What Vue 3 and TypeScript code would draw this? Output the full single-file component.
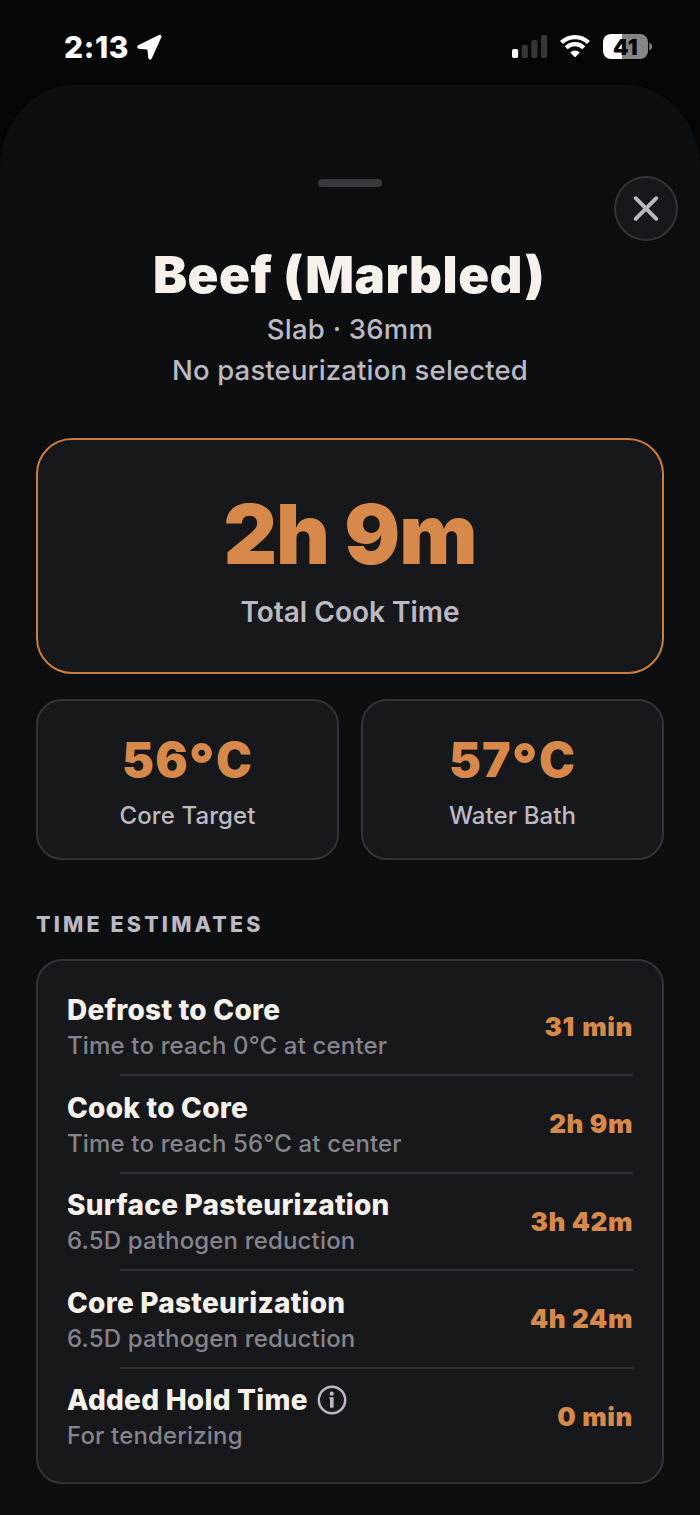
<script setup lang="ts">
interface Stat {
  value: string
  label: string
  kind: string
}

interface Estimate {
  title: string
  note: string
  value: string
  info?: boolean
  kind: string
}

const stats: Stat[] = [
  { value: '56', label: 'Core Target', kind: 'core' },
  { value: '57', label: 'Water Bath', kind: 'bath' },
]

const estimates: Estimate[] = [
  { title: 'Defrost to Core', note: 'Time to reach 0°C at center', value: '31 min', kind: 'defrost' },
  { title: 'Cook to Core', note: 'Time to reach 56°C at center', value: '2h 9m', kind: 'cook' },
  { title: 'Surface Pasteurization', note: '6.5D pathogen reduction', value: '3h 42m', kind: 'surface' },
  { title: 'Core Pasteurization', note: '6.5D pathogen reduction', value: '4h 24m', kind: 'pasteur' },
  { title: 'Added Hold Time', note: 'For tenderizing', value: '0 min', info: true, kind: 'hold' },
]
</script>

<template>
  <div class="screen">
    <header class="status">
      <div class="status-left">
        <span class="clock">2:13</span>
        <svg class="arrow" width="28" height="28" viewBox="0 0 28 28">
          <path d="M4 12.9 L24.7 2.6 L15.1 23.8 L14 13.9 Z" fill="#fff" stroke="#fff" stroke-width="3.6" stroke-linejoin="round" />
        </svg>
      </div>
      <div class="status-right">
        <svg class="signal" width="36" height="24" viewBox="0 0 36 24">
          <rect x="0" y="14" width="6.2" height="9" rx="1.8" fill="#fff" />
          <rect x="9.7" y="10" width="6.2" height="13" rx="1.8" fill="#353636" />
          <rect x="19.3" y="5" width="6.2" height="18" rx="1.8" fill="#353636" />
          <rect x="29" y="0" width="6.2" height="23" rx="1.8" fill="#353636" />
        </svg>
        <svg class="wifi" width="30" height="24" viewBox="0 0 30 24">
          <g fill="none" stroke="#fff" stroke-width="4.3">
            <path d="M1.5 8.5 A19.4 19.4 0 0 1 28.5 8.5" />
            <path d="M6.2 13.7 A12.5 12.5 0 0 1 23.8 13.7" />
          </g>
          <path d="M10.2 18.4 A6.9 6.9 0 0 1 19.8 18.4 L15.7 22.8 Q15 23.4 14.3 22.8 Z" fill="#fff" />
        </svg>
        <div class="battery"><span>41</span></div>
        <svg class="nub" width="4" height="9" viewBox="0 0 4 9">
          <path d="M0.3 0.4 Q3.2 1.6 3.2 4.5 Q3.2 7.4 0.3 8.6 Z" fill="#858585" />
        </svg>
      </div>
    </header>

    <main class="sheet">
      <div class="handle"></div>
      <button class="close" aria-label="Close">
        <svg width="28" height="28" viewBox="0 0 28 28">
          <path d="M3.7 3.2 L24.3 23.8 M24.3 3.2 L3.7 23.8" stroke="#bcb9c3" stroke-width="3.9" stroke-linecap="round" />
        </svg>
      </button>

      <h1>Beef (Marbled)</h1>
      <p class="meta slab">Slab · 36mm</p>
      <p class="meta pasteurization">No pasteurization selected</p>

      <section class="hero">
        <div class="hero-value">2h 9m</div>
        <div class="hero-label">Total Cook Time</div>
      </section>

      <section class="stats">
        <div v-for="s in stats" :key="s.kind" class="stat" :class="s.kind">
          <div class="stat-value">{{ s.value }}<span class="degree">°</span>C</div>
          <div class="stat-label">{{ s.label }}</div>
        </div>
      </section>

      <h2>TIME ESTIMATES</h2>
      <section class="list">
        <div v-for="e in estimates" :key="e.kind" class="row" :class="e.kind">
          <div class="row-text">
            <div class="row-title">
              <span>{{ e.title }}</span>
              <svg v-if="e.info" width="30" height="30" viewBox="0 0 30 30">
                <circle cx="15" cy="15" r="13.2" fill="none" stroke="#bcb9c3" stroke-width="2.5" />
                <circle cx="14.7" cy="8.7" r="2.1" fill="#bcb9c3" />
                <path d="M12.4 12.2 H16.6 V22.8 H13 V14 H12.4 Z" fill="#bcb9c3" />
              </svg>
            </div>
            <div class="row-note">{{ e.note }}</div>
          </div>
          <div class="row-value">{{ e.value }}</div>
        </div>
      </section>
    </main>
  </div>
</template>

<style>
body {
  margin: 0;
  background: #060606;
}
</style>

<style scoped>
.screen {
  width: 700px;
  height: 1515px;
  overflow: hidden;
  background: #060606;
  font-family: Inter, "Liberation Sans", sans-serif;
  color: #f6f1ea;
  display: flex;
  flex-direction: column;
}
.status {
  height: 85px;
  flex: none;
  display: flex;
  justify-content: space-between;
  align-items: flex-start;
  box-sizing: border-box;
  padding: 34px 47px 0 64px;
}
.status-left,
.status-right {
  display: flex;
  align-items: flex-start;
}
.clock {
  font-size: 30px;
  line-height: 26px;
  font-weight: 800;
  letter-spacing: 0.6px;
  color: #fff;
  width: 71px;
  white-space: nowrap;
}
.signal {
  margin-top: 1px;
}
.wifi {
  margin: 0 13px 0 12px;
}
.battery {
  width: 45px;
  height: 25px;
  border-radius: 8px;
  background: linear-gradient(90deg, #fff 0 19px, #858585 19px);
  color: #060606;
  font-size: 22px;
  font-weight: 900;
  letter-spacing: 0.4px;
  line-height: 26px;
  text-align: center;
}
.nub {
  margin: 8px 0 0 1px;
}
.sheet {
  position: relative;
  flex: 1;
  box-sizing: border-box;
  padding: 94px 36px 0;
  border-radius: 74px 74px 0 0 / 84px 84px 0 0;
  background: #0d0e10;
}
.handle {
  width: 64px;
  height: 8px;
  border-radius: 4px;
  background: #38383f;
  margin: 0 auto;
}
.close {
  position: absolute;
  top: 91px;
  right: 22px;
  width: 64px;
  height: 65px;
  box-sizing: border-box;
  padding: 0;
  border: 2px solid #33343a;
  border-radius: 50%;
  background: #17181c;
  display: flex;
  align-items: center;
  justify-content: center;
}
h1,
h2,
p {
  margin: 0;
}
h1 {
  margin-top: 58px;
  font-size: 51px;
  line-height: 60px;
  font-weight: 900;
  letter-spacing: 0.55px;
  text-align: center;
  text-indent: -2px;
}
.meta {
  font-size: 27.5px;
  line-height: 41px;
  font-weight: 500;
  letter-spacing: 0.15px;
  text-align: center;
  color: #bcb9c3;
}
.slab {
  margin-top: 4px;
  letter-spacing: 0.25px;
}
.hero {
  box-sizing: border-box;
  height: 236px;
  margin-top: 47px;
  padding-top: 49px;
  border: 2px solid #c87d43;
  border-radius: 36px;
  background: #17181c;
  text-align: center;
}
.hero-value {
  font-size: 83px;
  line-height: 90px;
  font-weight: 900;
  letter-spacing: -1.1px;
  color: #d6894b;
}
.hero-label {
  margin-top: 15px;
  font-size: 28px;
  line-height: 36px;
  font-weight: 600;
  color: #bcb9c3;
}
.stats {
  display: grid;
  grid-template-columns: 1fr 1fr;
  gap: 22px;
  margin-top: 25px;
}
.stat {
  box-sizing: border-box;
  height: 161px;
  padding-top: 30.5px;
  border: 2px solid #33343a;
  border-radius: 26px;
  background: #17181c;
  text-align: center;
}
.stat-value {
  font-size: 48px;
  line-height: 56px;
  font-weight: 900;
  letter-spacing: 1.2px;
  color: #d6894b;
}
.degree {
  font-size: 56px;
  line-height: 0;
  vertical-align: -7px;
}
.stat-label {
  margin-top: 13px;
  font-size: 24px;
  line-height: 30px;
  font-weight: 500;
  letter-spacing: 0.1px;
  color: #bcb9c3;
}
h2 {
  margin-top: 50px;
  font-size: 21.5px;
  line-height: 28px;
  font-weight: 800;
  letter-spacing: 3.15px;
  color: #bcb9c3;
}
.list {
  box-sizing: border-box;
  height: 525px;
  margin-top: 21px;
  padding: 16.9px 29px 0;
  border: 2px solid #33343a;
  border-radius: 26px;
  background: #17181c;
}
.row {
  position: relative;
  box-sizing: border-box;
  height: 97.5px;
  display: flex;
  align-items: center;
  justify-content: space-between;
}
.row:not(:last-child)::after {
  content: "";
  position: absolute;
  left: 53px;
  right: 0;
  bottom: -0.8px;
  height: 2px;
  background: #303136;
}
.row-title {
  display: flex;
  align-items: center;
  gap: 9.5px;
  font-size: 28px;
  line-height: 36px;
  height: 36px;
  font-weight: 800;
  letter-spacing: 0.25px;
}
.row-note {
  margin-top: 2.8px;
  font-size: 24px;
  line-height: 30px;
  font-weight: 500;
  letter-spacing: 0.16px;
  color: #85848c;
}
.row-value {
  font-size: 26px;
  line-height: 32px;
  font-weight: 900;
  letter-spacing: 0.6px;
  margin-right: -0.1px;
  color: #d6894b;
}
.defrost .row-value {
  word-spacing: 1.5px;
}
</style>
